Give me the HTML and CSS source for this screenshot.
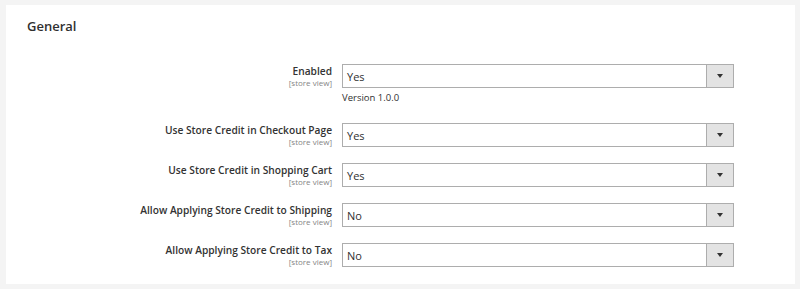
FILE: index.html
```html
<!DOCTYPE html>
<html>
<head>
<meta charset="utf-8">
<link rel="stylesheet" href="styles.css">
</head>
<body>
<div class="panel">
  <h2 class="title">General</h2>
  <div class="rows">
    <div class="row">
      <div class="label"><span class="name">Enabled</span><span class="scope">[store view]</span></div>
      <div class="control">
        <div class="select"><span class="value">Yes</span><span class="arrow"></span></div>
        <div class="note">Version 1.0.0</div>
      </div>
    </div>
    <div class="row">
      <div class="label"><span class="name">Use Store Credit in Checkout Page</span><span class="scope">[store view]</span></div>
      <div class="control">
        <div class="select"><span class="value">Yes</span><span class="arrow"></span></div>
      </div>
    </div>
    <div class="row">
      <div class="label"><span class="name">Use Store Credit in Shopping Cart</span><span class="scope">[store view]</span></div>
      <div class="control">
        <div class="select"><span class="value">Yes</span><span class="arrow"></span></div>
      </div>
    </div>
    <div class="row">
      <div class="label"><span class="name">Allow Applying Store Credit to Shipping</span><span class="scope">[store view]</span></div>
      <div class="control">
        <div class="select"><span class="value">No</span><span class="arrow"></span></div>
      </div>
    </div>
    <div class="row">
      <div class="label"><span class="name">Allow Applying Store Credit to Tax</span><span class="scope">[store view]</span></div>
      <div class="control">
        <div class="select"><span class="value">No</span><span class="arrow"></span></div>
      </div>
    </div>
  </div>
</div>
</body>
</html>
```
FILE: styles.css
```css
html, body {
  margin: 0;
  padding: 0;
  background: #f4f4f4;
  font-family: "Open Sans", "Liberation Sans", sans-serif;
  color: #303030;
}
body {
  padding: 5px 5px 5px 6px;
  height: 289px;
  box-sizing: border-box;
}
.panel {
  background: #fff;
  width: 789px;
  height: 279px;
  box-sizing: border-box;
  padding: 12px 0 0 21px;
}
.title {
  margin: 0;
  font-size: 13px;
  font-weight: 600;
  line-height: 18px;
  color: #303030;
}
.rows {
  display: flex;
  flex-direction: column;
  gap: 16px;
  margin-top: 29px;
}
.row {
  display: flex;
  align-items: flex-start;
}
.label {
  width: 305px;
  display: flex;
  flex-direction: column;
  align-items: flex-end;
  padding-top: 1px;
}
.name {
  font-size: 10.2px;
  font-weight: 600;
  line-height: 13px;
  color: #333;
}
.scope {
  font-size: 8px;
  line-height: 9px;
  color: #858585;
}
.control {
  margin-left: 10px;
  width: 392px;
}
.select {
  height: 24px;
  border: 1px solid #adadad;
  box-sizing: border-box;
  display: flex;
  align-items: center;
  background: #fff;
}
.value {
  flex: 1;
  padding-left: 4px;
  font-size: 11px;
  color: #303030;
}
.arrow {
  width: 26px;
  align-self: stretch;
  background: #e3e3e3;
  border-left: 1px solid #adadad;
  position: relative;
}
.arrow::after {
  content: "";
  position: absolute;
  left: 50%;
  top: 50%;
  margin-left: -3px;
  margin-top: -2px;
  border-left: 3px solid transparent;
  border-right: 3px solid transparent;
  border-top: 4px solid #333;
}
.note {
  font-size: 9.5px;
  line-height: 13px;
  margin-top: 3px;
  height: 16px;
  color: #303030;
}
```
